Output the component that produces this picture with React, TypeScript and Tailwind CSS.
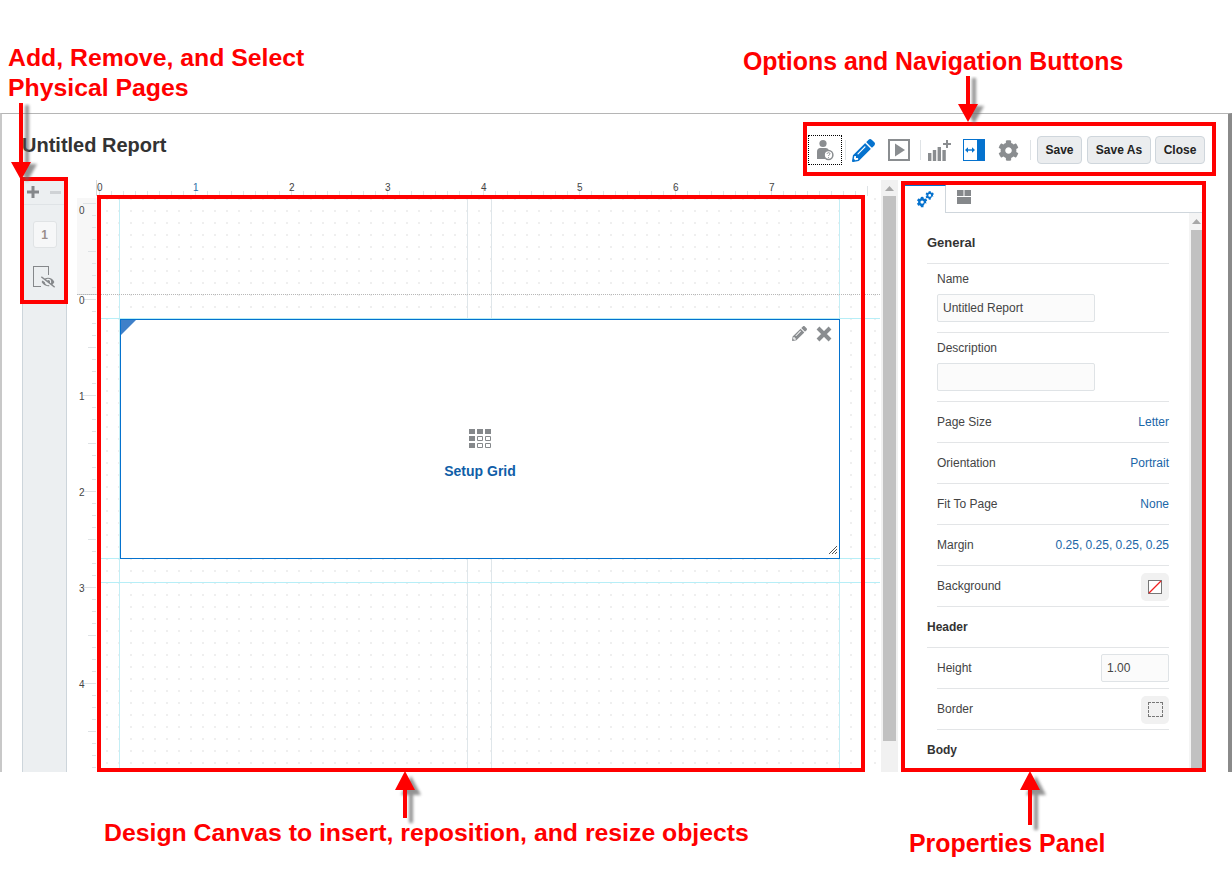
import React from 'react';
import { FaCog, FaPencilAlt, FaEyeSlash } from 'react-icons/fa';

const ArrowDown: React.FC<{ className: string; height: number }> = ({ className, height }) => (
  <svg className={`absolute ${className}`} width="40" height={height + 12} viewBox={`0 0 40 ${height + 12}`}>
    <defs>
      <filter id="arrowBlurDown" x="-30%" y="-30%" width="160%" height="160%"><feGaussianBlur stdDeviation="1.8" /></filter>
    </defs>
    <path d={`M10 0h4v${height - 18}h8l-10 18l-10 -18h8z`} transform="translate(6 2)" fill="#666" filter="url(#arrowBlurDown)" opacity="0.7" />
    <path d={`M10 0h4v${height - 18}h8l-10 18l-10 -18h8z`} fill="#ff0000" />
  </svg>
);

const ArrowUp: React.FC<{ className: string; height: number }> = ({ className, height }) => (
  <svg className={`absolute ${className}`} width="40" height={height + 12} viewBox={`0 0 40 ${height + 12}`}>
    <defs>
      <filter id="arrowBlurUp" x="-30%" y="-30%" width="160%" height="160%"><feGaussianBlur stdDeviation="1.6" /></filter>
    </defs>
    <path d={`M12 0l-10 19h8v${height - 19}h4v-${height - 19}h8z`} transform="translate(6 5)" fill="#666" filter="url(#arrowBlurUp)" opacity="0.7" />
    <path d={`M12 0l-10 19h8v${height - 19}h4v-${height - 19}h8z`} fill="#ff0000" />
  </svg>
);

const TopRuler = () => (
  <svg width="813" height="16" className="block">
    <line x1="29.5" y1="0" x2="29.5" y2="16" stroke="#d5d9dd" />
    {Array.from({ length: 65 }).map((_, i) => (
      <line key={i} x1={32.5 + i * 12} y1={i % 8 === 0 ? 6 : 11} x2={32.5 + i * 12} y2="16" stroke="#dfe3e6" />
    ))}
    {[0, 1, 2, 3, 4, 5, 6, 7].map(n => (
      <text key={n} x={30 + n * 96} y="11" fontSize="10" fill={n === 1 ? '#2f6fa8' : '#444'} fontFamily="Liberation Sans">{n}</text>
    ))}
  </svg>
);

const LeftRuler = () => (
  <svg width="30" height="575" className="block">
    <rect x="10" y="2" width="20" height="96" fill="#f7f7f7" />
    {Array.from({ length: 48 }).map((_, i) => {
      const y = 7.5 + i * 12;
      const k = (i - 8) % 8;
      const big = k === 0;
      const mid = k === 4 || k === -4;
      return <line key={i} x1={big ? 16 : mid ? 21 : 25} y1={y} x2="29" y2={y} stroke="#dfe3e6" />;
    })}
    <line x1="10" y1="98.5" x2="30" y2="98.5" stroke="#cfd3d7" />
    {[
      ['0', 18],
      ['0', 108],
      ['1', 204],
      ['2', 300],
      ['3', 396],
      ['4', 492],
    ].map(([t, y], i) => (
      <text key={i} x="12" y={y} fontSize="10" fill="#444" fontFamily="Liberation Sans">{t}</text>
    ))}
  </svg>
);

const UpTriangle = () => (
  <svg width="9" height="5" viewBox="0 0 9 5" className="block">
    <path d="M4.500 0L9 5H0z" fill="#a8a8a8" />
  </svg>
);

const Row: React.FC<{ label: string; children: React.ReactNode }> = ({ label, children }) => (
  <div className="h-[41px] ml-[10px] flex items-center justify-between border-b border-[#e3e5e7] text-[12px] text-[#444]">
    <span>{label}</span>
    {children}
  </div>
);

const Link: React.FC<{ text: string }> = ({ text }) => <span className="text-[#1a66a8]">{text}</span>;

const SwatchButton: React.FC<{ children: React.ReactNode }> = ({ children }) => (
  <div className="w-[28px] h-[28px] rounded-[5px] bg-[#f1f1f1] flex items-center justify-center mt-[1px]">{children}</div>
);

const Section: React.FC<{ title: string; last?: boolean }> = ({ title, last }) => (
  <div className={`h-[41px] flex items-center text-[12px] font-bold text-[#333] ${last ? 'pb-[2px]' : 'border-b border-[#e3e5e7]'}`}>{title}</div>
);

const ToolButton: React.FC<{ children: React.ReactNode; className: string }> = ({ children, className }) => (
  <button className={`h-[28px] rounded-[4px] border border-[#cfd6dc] bg-[#ebedef] text-[12px] font-bold text-[#222] ${className}`}>{children}</button>
);

const GEAR =
  'M487 315l-43-25a195 195 0 0 0 0-68l43-25c5-3 7-9 6-14-11-36-30-68-55-95-4-4-10-5-15-2l-43 25a190 190 0 0 0-59-34V27c0-6-4-10-9-11a201 201 0 0 0-110 0c-5 1-9 5-9 11v50a190 190 0 0 0-59 34L91 86c-5-3-11-2-15 2-25 27-44 59-55 95-1 5 1 11 6 14l43 25a195 195 0 0 0 0 68l-43 25c-5 3-7 9-6 14 11 36 30 68 55 95 4 4 10 5 15 2l43-25a190 190 0 0 0 59 34v50c0 6 4 10 9 11a201 201 0 0 0 110 0c5-1 9-5 9-11v-50a190 190 0 0 0-59-34l43 25c5 3 11 2 15-2 25-27 44-59 55-95 1-5-1-11-6-14zM256 336a80 80 0 1 1 0-160 80 80 0 0 1 0 160z';

const App: React.FC = () => {
  return (
    <div className="relative w-[1232px] h-[887px] overflow-hidden bg-white font-['Liberation_Sans',Arial,sans-serif]">
      {/* annotation strip */}
      <div className="h-[113px]" />

      {/* app frame */}
      <div className="h-[659px] border-t border-[#b5b5b5] border-l-2 border-l-[#c8c8c8] border-r-4 border-r-[#8a8a8a] pl-[20px] flex flex-col">
        <div className="h-[66px] flex items-start justify-between pr-[23px]">
          <h1 className="mt-[19px] text-[20px] leading-[24px] font-bold text-[#333]">Untitled Report</h1>
          <div className="mt-[20px] flex items-center h-[32px]">
            <div className="w-[34px] h-[30px] border border-dotted border-black flex items-center justify-center">
              <svg width="18" height="22" viewBox="0 0 18 22">
                <circle cx="7" cy="4.500" r="3.600" fill="#8a8d90" />
                <path d="M1 20v-7.500c0-2 1.400-3.500 3.200-3.500h5.600c1.400 0 2.400.8 2.800 2v9z" fill="#8a8d90" />
                <circle cx="12.500" cy="16" r="4.400" fill="#fff" stroke="#8a8d90" strokeWidth="1.500" />
                <path d="M11 14.800c.3-1.500 3-1.500 3 0 0 1-1.500 1-1.500 2.200M12.500 18v.8" stroke="#8a8d90" strokeWidth="1" fill="none" />
              </svg>
            </div>
            <div className="w-px h-[20px] bg-[#dfe3e6] ml-[3px]" />
            <FaPencilAlt className="ml-[6px] text-[#0572ce]" size={23} />
            <svg width="22" height="22" viewBox="0 0 22 22" className="ml-[13px]">
              <rect x="1" y="1" width="20" height="20" fill="#fff" stroke="#8a8d90" strokeWidth="2" />
              <path d="M7 4.500L17 11L7 17.500z" fill="#8a8d90" />
            </svg>
            <div className="w-px h-[20px] bg-[#dfe3e6] ml-[10px]" />
            <svg width="23" height="23" viewBox="0 0 23 23" className="ml-[7px]">
              <path d="M0 14h3.400v8H0zM4.800 11h3.400v11H4.800zM9.600 8h3.400v14H9.600zM14.400 11h3.400v11h-3.400z" fill="#8a8d90" />
              <path d="M15 5h8M19 1v8" stroke="#8a8d90" strokeWidth="2" />
            </svg>
            <svg width="22" height="22" viewBox="0 0 22 22" className="ml-[12px]">
              <rect x="0.500" y="0.500" width="21" height="21" fill="#fff" stroke="#0572ce" />
              <rect x="14" y="0" width="8" height="22" fill="#0572ce" />
              <path d="M4 11h6" stroke="#0572ce" strokeWidth="1.400" />
              <path d="M2 11l3-2.800v5.600zM12 11l-3-2.800v5.600z" fill="#0572ce" />
            </svg>
            <FaCog className="ml-[13px] text-[#8a8d90]" size={21} />
            <div className="w-px h-[20px] bg-[#dfe3e6] ml-[11px]" />
            <ToolButton className="ml-[6px] w-[45px]">Save</ToolButton>
            <ToolButton className="ml-[5px] w-[64px]">Save As</ToolButton>
            <ToolButton className="ml-[4px] w-[50px]">Close</ToolButton>
          </div>
        </div>

        <div className="flex-1 flex min-h-0">
          {/* physical pages */}
          <div className="w-[45px] bg-[#eceff1] border-x border-[#cdd5db] flex flex-col items-center">
            <div className="w-full h-[25px] border-b border-[#dfe3e6] flex items-center justify-between pl-[4px] pr-[5px]">
              <svg width="12" height="12" viewBox="0 0 12 12"><path d="M4.500 0h3v4.500H12v3H7.500V12h-3V7.500H0v-3h4.500z" fill="#85888b" /></svg>
              <div className="w-[11px] h-[3px] bg-[#cfd2d5]" />
            </div>
            <div className="mt-[16px] w-[24px] h-[27px] rounded-[3px] border border-[#e0e3e5] bg-[#f6f7f8] flex items-center justify-center text-[12px] font-bold text-[#9a8f8c]">1</div>
            <div className="relative mt-[18px] w-[22px] h-[22px] -ml-[1px]">
              <div className="absolute left-0 top-0 w-[16px] h-[21px] border border-[#85888b]" />
              <FaEyeSlash className="absolute left-[8px] top-[9px] text-[#85888b] bg-[#eceff1]" size={14} />
            </div>
          </div>

          {/* canvas */}
          <div className="w-[813px] flex flex-col">
            <TopRuler />
            <div className="flex flex-1 min-h-0">
              <LeftRuler />
              <div className="relative flex-1 bg-[radial-gradient(#efefef_1px,transparent_1.2px)] bg-[size:12px_12px] bg-[position:4px_9px]">
                <div className="absolute left-[22px] top-0 bottom-0 w-px bg-[#c4eef5]" />
                <div className="absolute left-[370px] top-0 bottom-0 w-px bg-[#dfe6ea]" />
                <div className="absolute left-[394px] top-0 bottom-0 w-px bg-[#dfe6ea]" />
                <div className="absolute left-[742px] top-0 bottom-0 w-px bg-[#c4eef5]" />
                <div className="absolute left-[-20px] right-0 top-[98px] border-t border-dotted border-[#b8b8b8]" />
                <div className="absolute left-0 right-0 top-[122px] h-px bg-[#b6eef7]" />
                <div className="absolute left-0 right-0 top-[362px] h-px bg-[#b6eef7]" />
                <div className="absolute left-0 right-0 top-[386px] h-px bg-[#b6eef7]" />

                {/* grid object */}
                <div className="absolute left-[23px] top-[123px] w-[720px] h-[240px] pt-[34px] bg-white border border-[#0572ce] flex flex-col items-center justify-center">
                  <div className="absolute left-0 top-0 w-0 h-0 border-t-[15px] border-r-[15px] border-t-[#3f80c9] border-r-transparent" />
                  <FaPencilAlt className="absolute right-[32px] top-[6px] text-[#8a8d90]" size={15} />
                  <svg width="16" height="16" viewBox="0 0 16 16" className="absolute right-[7px] top-[6px]">
                    <path d="M2 2l12 12M14 2L2 14" stroke="#8a8d90" strokeWidth="4" />
                  </svg>
                  <svg width="22" height="19" viewBox="0 0 22 19" className="mt-[-5px]">
                    <path d="M0 0h6v5H0zM8 0h6v5H8zM16 0h6v5h-6zM0 7h6v5H0zM0 14h6v5H0z" fill="#85888b" />
                    <path d="M8.500 7.500h5v4h-5zM16.500 7.500h5v4h-5zM8.500 14.500h5v4h-5zM16.500 14.500h5v4h-5z" fill="none" stroke="#85888b" />
                  </svg>
                  <div className="mt-[15px] text-[14px] leading-[16px] font-bold text-[#0f5ea8]">Setup Grid</div>
                  <svg width="8" height="8" viewBox="0 0 8 8" className="absolute right-[2px] bottom-[4px]">
                    <path d="M0 8L8 0M3 8L8 3M6 8L8 6" stroke="#555" />
                  </svg>
                </div>
              </div>
            </div>
          </div>

          {/* canvas scrollbar */}
          <div className="ml-px w-[17px] bg-[#f1f1f1] flex flex-col items-center">
            <div className="h-[16px] flex items-center"><UpTriangle /></div>
            <div className="w-[13px] h-[545px] bg-[#c1c1c1]" />
          </div>

          {/* properties panel */}
          <div className="ml-[7px] w-[298px] flex flex-col">
            <div className="h-[28px] mt-[5px] flex">
              <div className="w-[41px] border-t border-[#0572ce] border-r border-r-[#cfd6dc] flex items-center justify-center">
                <svg width="17" height="17" viewBox="0 0 512 512">
                  <g fill="#0572ce">
                    <g transform="translate(-10 170) scale(0.64)"><path d={GEAR} /></g>
                    <g transform="translate(250 0) scale(0.52)"><path d={GEAR} /></g>
                  </g>
                </svg>
              </div>
              <div className="flex-1 border-b border-[#cfd6dc] pl-[11px] pt-[5px]">
                <svg width="14" height="14" viewBox="0 0 14 14" className="block">
                  <path d="M0 0h6.500v6H0zM7.500 0H14v6H7.500zM0 7h14v7H0z" fill="#85888b" />
                </svg>
              </div>
            </div>
            <div className="flex-1 min-h-0 flex overflow-hidden">
              <div className="w-[284px] pl-[22px] pr-[20px] shrink-0">
                <div className="h-[51px] flex items-end pb-[12px] border-b border-[#e3e5e7] text-[13px] leading-[16px] font-bold text-[#333]">General</div>
                <div className="h-[69px] ml-[10px] pt-[8px] border-b border-[#e3e5e7] text-[12px] text-[#444]">
                  <div className="leading-[14px]">Name</div>
                  <div className="mt-[8px] w-[158px] h-[28px] bg-[#fbfbfb] border border-[#dfe3e6] rounded-[2px] px-[5px] leading-[26px]">Untitled Report</div>
                </div>
                <div className="h-[69px] ml-[10px] pt-[8px] border-b border-[#e3e5e7] text-[12px] text-[#444]">
                  <div className="leading-[14px]">Description</div>
                  <div className="mt-[8px] w-[158px] h-[28px] bg-[#fbfbfb] border border-[#dfe3e6] rounded-[2px]" />
                </div>
                <Row label="Page Size"><Link text="Letter" /></Row>
                <Row label="Orientation"><Link text="Portrait" /></Row>
                <Row label="Fit To Page"><Link text="None" /></Row>
                <Row label="Margin"><Link text="0.25, 0.25, 0.25, 0.25" /></Row>
                <Row label="Background">
                  <SwatchButton>
                    <svg width="14" height="14" viewBox="0 0 14 14"><rect x="0.500" y="0.500" width="13" height="13" fill="#fff" stroke="#777" /><path d="M1 13L13 1" stroke="#f02020" strokeWidth="1.300" /></svg>
                  </SwatchButton>
                </Row>
                <Section title="Header" />
                <Row label="Height">
                  <div className="w-[68px] h-[28px] bg-[#fbfbfb] border border-[#dfe3e6] rounded-[2px] px-[5px] leading-[26px]">1.00</div>
                </Row>
                <Row label="Border">
                  <SwatchButton>
                    <div className="w-[15px] h-[15px] border border-dashed border-[#777]" />
                  </SwatchButton>
                </Row>
                <Section title="Body" last />
              </div>
              <div className="w-[13px] bg-[#f4f4f4] flex flex-col items-end">
                <div className="h-[17px] w-[11px] flex items-center justify-center"><UpTriangle /></div>
                <div className="flex-1 w-[11px] bg-[#c1c1c1]" />
              </div>
            </div>
          </div>
        </div>
      </div>

      {/* red callout boxes */}
      <div className="absolute left-[20px] top-[177px] w-[48px] h-[127px] border-4 border-[#ff0000]" />
      <div className="absolute left-[803px] top-[122px] w-[413px] h-[54px] border-4 border-[#ff0000]" />
      <div className="absolute left-[97px] top-[195px] w-[768px] h-[577px] border-4 border-[#ff0000]" />
      <div className="absolute left-[901px] top-[181px] w-[305px] h-[591px] border-4 border-[#ff0000]" />

      {/* callout labels */}
      <div className="absolute left-[8px] top-[43px] text-[24.8px] leading-[30px] font-bold text-[#ff0000]">
        Add, Remove, and Select<br />Physical Pages
      </div>
      <div className="absolute left-[743px] top-[46px] text-[24.9px] leading-[30px] font-bold text-[#ff0000]">Options and Navigation Buttons</div>
      <div className="absolute left-[104px] top-[818px] text-[24.8px] leading-[30px] font-bold text-[#ff0000]">Design Canvas to insert, reposition, and resize objects</div>
      <div className="absolute left-[909px] top-[828px] text-[24.9px] leading-[30px] font-bold text-[#ff0000]">Properties Panel</div>

      <ArrowDown className="left-[9px] top-[103px]" height={77} />
      <ArrowDown className="left-[956px] top-[76px]" height={46} />
      <ArrowUp className="left-[393px] top-[771px]" height={47} />
      <ArrowUp className="left-[1018px] top-[771px]" height={54} />
    </div>
  );
};

export default App;
